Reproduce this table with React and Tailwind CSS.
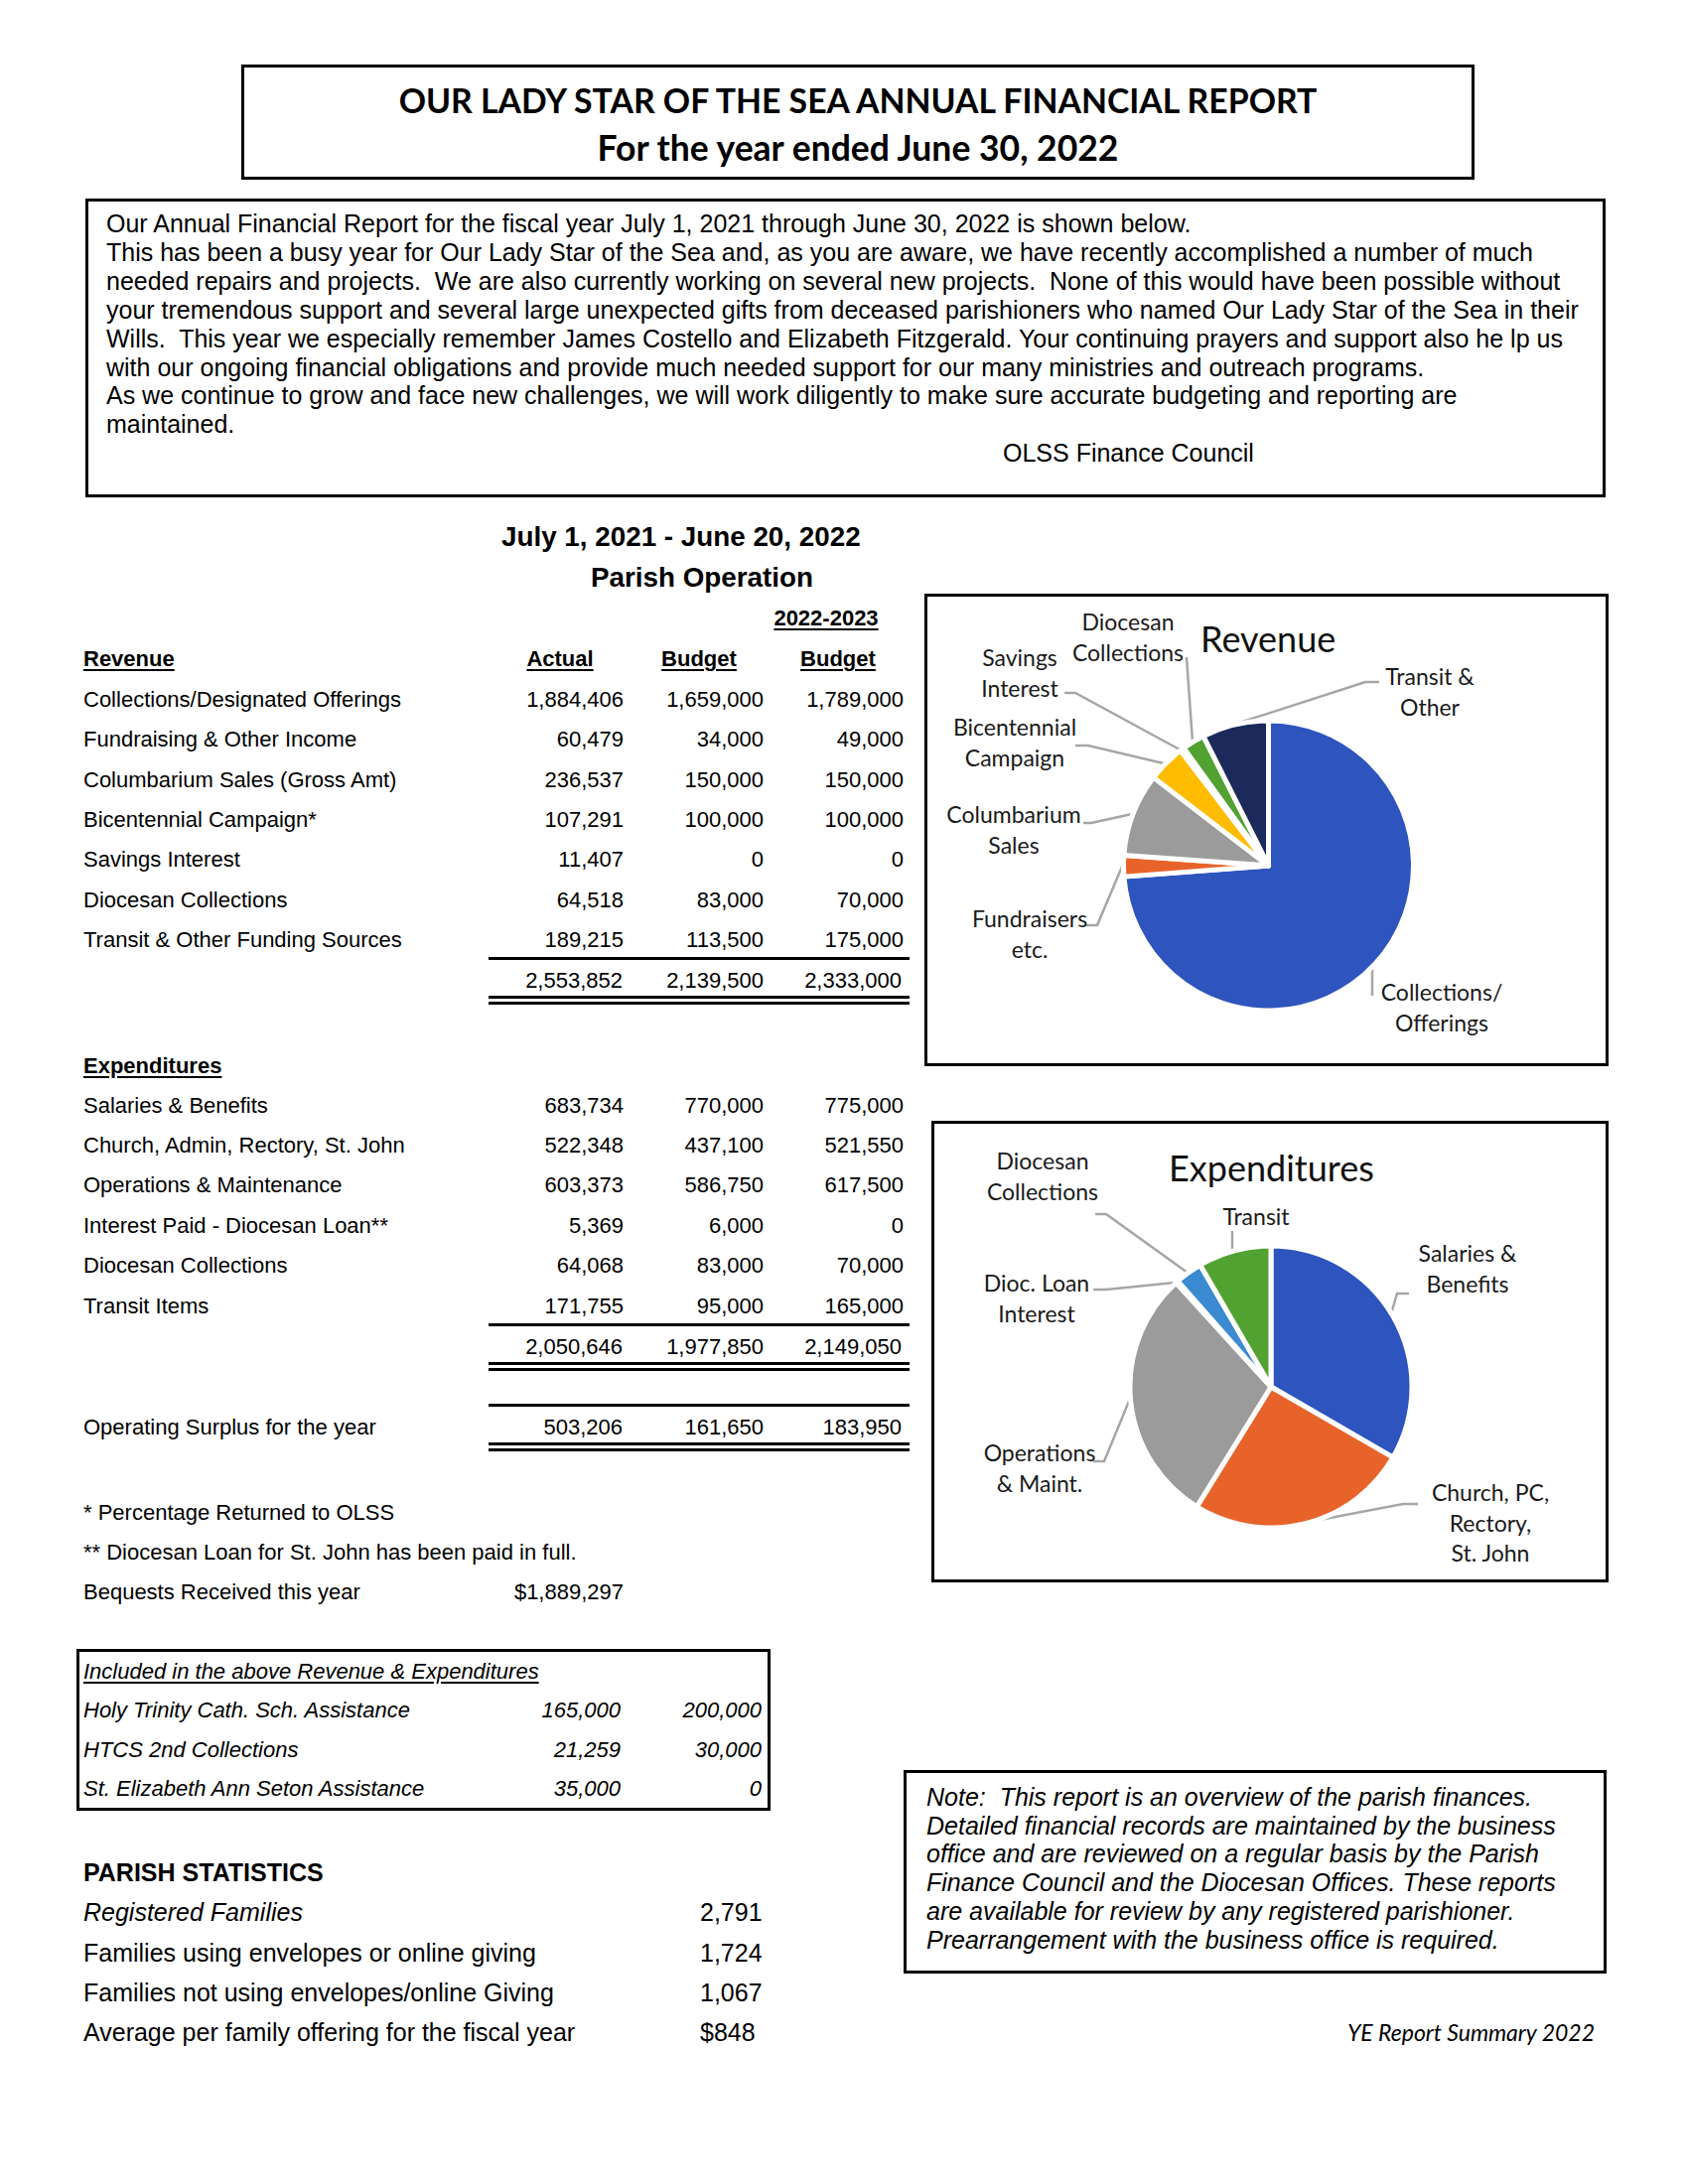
import React from 'react';

const revenueSlices = [
  { value: 1884406, color: '#2e54be' },
  { value: 60479, color: '#e8632a' },
  { value: 236537, color: '#9b9b9b' },
  { value: 107291, color: '#ffbc00' },
  { value: 11407, color: '#5b9bd5' },
  { value: 64518, color: '#52a232' },
  { value: 189215, color: '#1b2a5a' },
];

const expenseSlices = [
  { value: 683734, color: '#2e54be' },
  { value: 522348, color: '#e8632a' },
  { value: 603373, color: '#9b9b9b' },
  { value: 5369, color: '#ffbc00' },
  { value: 64068, color: '#3b8ad2' },
  { value: 171755, color: '#52a232' },
];

const revenueLabels = [
  { lines: ['Diocesan', 'Collections'], x: 202, y: 25 },
  { lines: ['Savings', 'Interest'], x: 93, y: 61 },
  { lines: ['Transit &', 'Other'], x: 506, y: 80 },
  { lines: ['Bicentennial', 'Campaign'], x: 88, y: 131 },
  { lines: ['Columbarium', 'Sales'], x: 87, y: 219 },
  { lines: ['Fundraisers', 'etc.'], x: 103, y: 324 },
  { lines: ['Collections/', 'Offerings'], x: 518, y: 398 },
];

const revenueLeaders = [
  '261,61 267,146',
  '138,97 149,97 254,154',
  '455,86 441,86 308,129',
  '149,150 162,150 238,168',
  '157,228 165,228 206,219',
  '159,331 171,331 196,272',
  '448,369 448,402',
];

const expenseLabels = [
  { lines: ['Diocesan', 'Collections'], x: 109, y: 37 },
  { lines: ['Transit'], x: 324, y: 93 },
  { lines: ['Salaries &', 'Benefits'], x: 537, y: 130 },
  { lines: ['Dioc. Loan', 'Interest'], x: 103, y: 160 },
  { lines: ['Operations', '& Maint.'], x: 106, y: 331 },
  { lines: ['Church, PC,', 'Rectory,', 'St. John'], x: 560, y: 371 },
];

const expenseLeaders = [
  '162,91 173,91 255,150',
  '300,108 300,130',
  '478,171 466,171 459,195',
  '160,167 173,167 242,160',
  '160,340 171,340 197,277',
  '487,383 472,383 372,402',
];

const revenueRows = [
  ['Collections/Designated Offerings', '1,884,406', '1,659,000', '1,789,000'],
  ['Fundraising & Other Income', '60,479', '34,000', '49,000'],
  ['Columbarium Sales (Gross Amt)', '236,537', '150,000', '150,000'],
  ['Bicentennial Campaign*', '107,291', '100,000', '100,000'],
  ['Savings Interest', '11,407', '0', '0'],
  ['Diocesan Collections', '64,518', '83,000', '70,000'],
  ['Transit & Other Funding Sources', '189,215', '113,500', '175,000'],
];

const expenseRows = [
  ['Salaries & Benefits', '683,734', '770,000', '775,000'],
  ['Church, Admin, Rectory, St. John', '522,348', '437,100', '521,550'],
  ['Operations & Maintenance', '603,373', '586,750', '617,500'],
  ['Interest Paid - Diocesan Loan**', '5,369', '6,000', '0'],
  ['Diocesan Collections', '64,068', '83,000', '70,000'],
  ['Transit Items', '171,755', '95,000', '165,000'],
];

const introLines = [
  'Our Annual Financial Report for the fiscal year July 1, 2021 through June 30, 2022 is shown below.',
  'This has been a busy year for Our Lady Star of the Sea and, as you are aware, we have recently accomplished a number of much',
  'needed repairs and projects.  We are also currently working on several new projects.  None of this would have been possible without',
  'your tremendous support and several large unexpected gifts from deceased parishioners who named Our Lady Star of the Sea in their',
  'Wills.  This year we especially remember James Costello and Elizabeth Fitzgerald. Your continuing prayers and support also he lp us',
  'with our ongoing financial obligations and provide much needed support for our many ministries and outreach programs.',
  'As we continue to grow and face new challenges, we will work diligently to make sure accurate budgeting and reporting are',
  'maintained.',
];

const noteLines = [
  'Note:  This report is an overview of the parish finances.',
  'Detailed financial records are maintained by the business',
  'office and are reviewed on a regular basis by the Parish',
  'Finance Council and the Diocesan Offices. These reports',
  'are available for review by any registered parishioner.',
  'Prearrangement with the business office is required.',
];

function point(cx, cy, r, deg) {
  const a = (deg * Math.PI) / 180;
  return [cx + r * Math.sin(a), cy - r * Math.cos(a)];
}

function PieChart({ width, height, cx, cy, r, slices, labels, leaders, title, titleX, titleY }) {
  const total = slices.reduce((s, d) => s + d.value, 0);
  let start = 0;
  const paths = slices.map((d, i) => {
    const sweep = (d.value / total) * 360;
    const end = start + sweep;
    const [x0, y0] = point(cx, cy, r, start);
    const [x1, y1] = point(cx, cy, r, end);
    const large = sweep > 180 ? 1 : 0;
    const path = `M ${cx} ${cy} L ${x0} ${y0} A ${r} ${r} 0 ${large} 1 ${x1} ${y1} Z`;
    start = end;
    return <path key={i} d={path} fill={d.color} stroke="#ffffff" strokeWidth="5" strokeLinejoin="round" />;
  });

  return (
    <svg width={width} height={height} viewBox={`0 0 ${width} ${height}`} className="block">
      {leaders.map((p, i) => (
        <polyline key={i} points={p} fill="none" stroke="#a6a6a6" strokeWidth="2.5" />
      ))}
      {paths}
      <text x={titleX} y={titleY} dominantBaseline="central" fontFamily="Lato, sans-serif" fontSize="36" fill="#111">
        {title}
      </text>
      {labels.map((l, i) =>
        l.lines.map((line, j) => (
          <text
            key={`${i}-${j}`}
            x={l.x}
            y={l.y + j * 30.5}
            textAnchor="middle"
            dominantBaseline="central"
            fontFamily="Lato, sans-serif"
            fontSize="23"
            fill="#1a1a1a"
          >
            {line}
          </text>
        ))
      )}
    </svg>
  );
}

function MoneyRow({ row, height = 'h-[40.45px]' }) {
  return (
    <div className={`grid grid-cols-[410px_140px_140px_140px] items-center ${height}`}>
      <div className="whitespace-nowrap">{row[0]}</div>
      <div className="text-right pr-[6px]">{row[1]}</div>
      <div className="text-right pr-[5px]">{row[2]}</div>
      <div className="text-right pr-[4px]">{row[3]}</div>
    </div>
  );
}

function TotalRow({ row }) {
  return (
    <div className="ml-[408px] w-[424px]">
      <div className="h-[3px] bg-black" />
      <div className="grid grid-cols-[142px_140px_140px] items-center h-[36px] pt-[4px]">
        <div className="text-right pr-[7px]">{row[0]}</div>
        <div className="text-right pr-[5px]">{row[1]}</div>
        <div className="text-right pr-[6px]">{row[2]}</div>
      </div>
      <div className="h-[9px] border-y-[3px] border-black" />
    </div>
  );
}

function App() {
  return (
    <div className="w-[1700px] min-h-[2200px] bg-white text-black font-['Liberation_Sans',Arial,sans-serif] pt-[65px]">
      {/* title */}
      <div className="ml-[243px] w-[1242px] h-[116px] border-[3px] border-black flex flex-col items-center justify-center font-['Lato',sans-serif] font-bold leading-[48px] pt-[4px]">
        <div className="text-[33.8px]">OUR LADY STAR OF THE SEA ANNUAL FINANCIAL REPORT</div>
        <div className="text-[35.5px]">For the year ended June 30, 2022</div>
      </div>

      {/* intro */}
      <div className="mt-[19px] ml-[86px] w-[1531px] h-[301px] border-[3px] border-black pl-[18px] pt-[8px] text-[25px] leading-[28.9px]">
        {introLines.map((line, i) => (
          <div key={i} className="whitespace-pre">{line}</div>
        ))}
        <div className="pl-[903px] whitespace-pre">OLSS Finance Council</div>
      </div>

      <div className="flex">
        {/* left column */}
        <div className="ml-[84px] w-[832px] pt-[19px] text-[22px]">
          <div className="h-[41px] leading-[41px] pl-[421px] font-bold text-[27.8px] whitespace-nowrap">July 1, 2021 - June 20, 2022</div>
          <div className="h-[41px] leading-[41px] pl-[511px] font-bold text-[27.8px] whitespace-nowrap">Parish Operation</div>
          <div className="grid grid-cols-[410px_140px_140px_140px] items-center h-[41px] font-bold">
            <div />
            <div />
            <div />
            <div className="text-center pr-[24px] underline underline-offset-[3px]">2022-2023</div>
          </div>
          <div className="grid grid-cols-[410px_140px_140px_140px] items-center h-[41px] font-bold">
            <div className="underline underline-offset-[3px]">Revenue</div>
            <div className="text-center underline underline-offset-[3px]">Actual</div>
            <div className="text-center underline underline-offset-[3px]">Budget</div>
            <div className="text-center underline underline-offset-[3px]">Budget</div>
          </div>
          <div className="h-[280px]">
            {revenueRows.map((r) => (
              <MoneyRow key={r[0]} row={r} />
            ))}
          </div>
          <TotalRow row={['2,553,852', '2,139,500', '2,333,000']} />

          <div className="mt-[41px] h-[40px] flex items-center font-bold">
            <span className="underline underline-offset-[3px]">Expenditures</span>
          </div>
          <div className="h-[240px]">
            {expenseRows.map((r) => (
              <MoneyRow key={r[0]} row={r} height="h-[40.4px]" />
            ))}
          </div>
          <TotalRow row={['2,050,646', '1,977,850', '2,149,050']} />

          <div className="mt-[33px] relative">
            <div className="absolute left-0 top-[5px] h-[36px] flex items-center">Operating Surplus for the year</div>
            <TotalRow row={['503,206', '161,650', '183,950']} />
          </div>

          <div className="mt-[41px]">
            <div className="h-[40px] flex items-center">* Percentage Returned to OLSS</div>
            <div className="h-[40px] flex items-center">** Diocesan Loan for St. John has been paid in full.</div>
            <MoneyRow row={['Bequests Received this year', '$1,889,297', '', '']} height="h-[40px]" />
          </div>

          {/* included box */}
          <div className="mt-[38px] -ml-[7px] w-[699px] h-[163px] border-[3px] border-black pl-[4px] pr-[6px] italic">
            <div className="h-[38px] flex items-center">
              <span className="underline underline-offset-[3px]">Included in the above Revenue &amp; Expenditures</span>
            </div>
            {[
              ['Holy Trinity Cath. Sch. Assistance', '165,000', '200,000'],
              ['HTCS 2nd Collections', '21,259', '30,000'],
              ['St. Elizabeth Ann Seton Assistance', '35,000', '0'],
            ].map((r, i) => (
              <div key={r[0]} className={`grid grid-cols-[1fr_140px_142px] items-center ${i === 2 ? 'h-[38px]' : 'h-[40px]'}`}>
                <div className="whitespace-nowrap">{r[0]}</div>
                <div className="text-right">{r[1]}</div>
                <div className="text-right">{r[2]}</div>
              </div>
            ))}
          </div>

          {/* stats */}
          <div className="mt-[43px] text-[25px]">
            <div className="h-[40px] flex items-center font-bold">PARISH STATISTICS</div>
            {[
              ['Registered Families', '2,791', true],
              ['Families using envelopes or online giving', '1,724', false],
              ['Families not using envelopes/online Giving', '1,067', false],
              ['Average per family offering for the fiscal year', '$848', false],
            ].map((r) => (
              <div key={r[0]} className="grid grid-cols-[621px_auto] items-center h-[40.3px]">
                <div className={r[2] ? 'italic whitespace-nowrap' : 'whitespace-nowrap'}>{r[0]}</div>
                <div>{r[1]}</div>
              </div>
            ))}
          </div>
        </div>

        {/* right column */}
        <div className="flex-1">
          <div className="mt-[97px] ml-[15px] w-[689px] h-[476px] border-[3px] border-black">
            <PieChart
              width={683}
              height={470}
              cx={343.5}
              cy={271}
              r={146}
              slices={revenueSlices}
              labels={revenueLabels}
              leaders={revenueLeaders}
              title="Revenue"
              titleX={275}
              titleY={42}
            />
          </div>

          <div className="mt-[55px] ml-[22px] w-[682px] h-[465px] border-[3px] border-black">
            <PieChart
              width={676}
              height={459}
              cx={339}
              cy={265}
              r={142}
              slices={expenseSlices}
              labels={expenseLabels}
              leaders={expenseLeaders}
              title="Expenditures"
              titleX={236}
              titleY={44}
            />
          </div>

          <div className="mt-[189px] -ml-[6px] w-[708px] h-[205px] border-[3px] border-black pl-[20px] pt-[10px] italic text-[25px] leading-[28.7px]">
            {noteLines.map((line, i) => (
              <div key={i} className="whitespace-pre">{line}</div>
            ))}
          </div>

          <div className="mt-[44px] pr-[94px] h-[30px] leading-[30px] text-right italic font-['Lato',sans-serif] text-[23px]">
            YE Report Summary 2022
          </div>
        </div>
      </div>
    </div>
  );
}

export default App;
